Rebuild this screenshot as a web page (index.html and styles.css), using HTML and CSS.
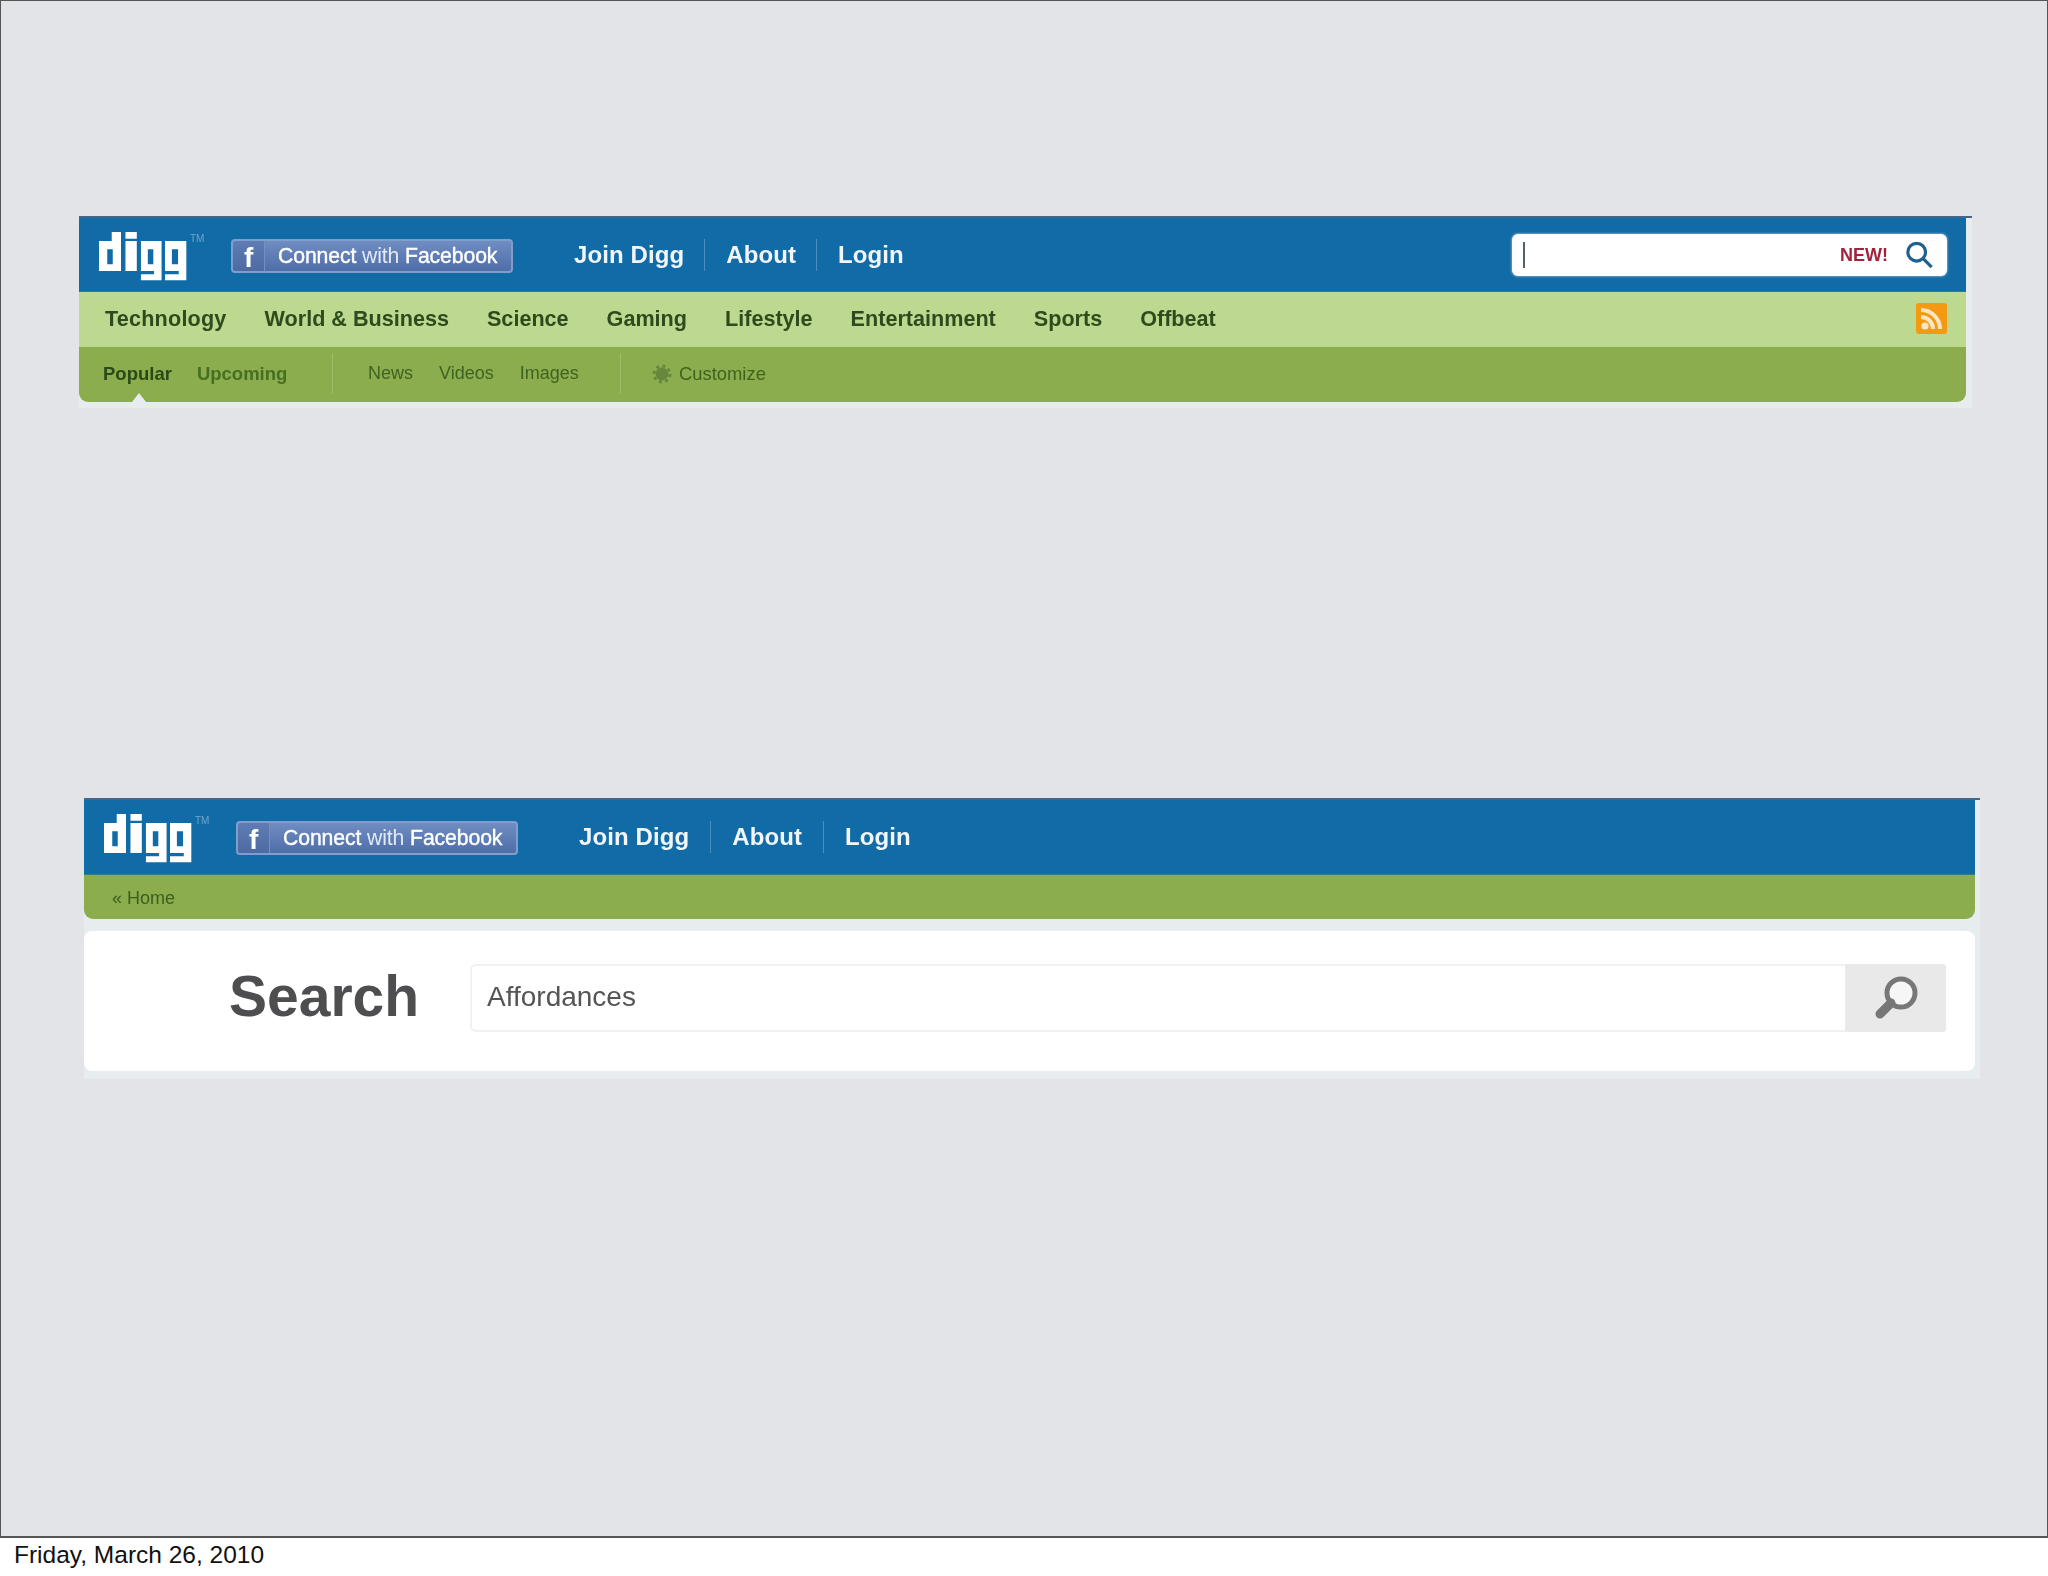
FILE: index.html
```html
<!DOCTYPE html>
<html lang="en">
<head>
<meta charset="utf-8">
<title>Digg navigation</title>
<link rel="stylesheet" href="styles.css">
</head>
<body>
<main class="slide">
  <section class="strip strip-one">
    <header class="bar-blue">
      <a class="logo" aria-label="digg">
        <svg class="logo-mark" viewBox="0 0 256 150" width="88" height="50" preserveAspectRatio="none"><path fill-rule="evenodd" d="M37 3H64V120H0V30H37ZM24 55V100H40V55ZM77 3H110V23H77ZM77 30H110V120H77ZM122 30H182V148H122V130H160V120H122ZM142 55V100H158V55ZM192 30H254V148H192V130H232V120H192ZM212 55V100H230V55Z"/></svg>
        <span class="tm">TM</span>
      </a>
      <a class="fb-button"><span class="fb-f">f</span><span class="fb-label"><b>Connect</b> with <b>Facebook</b></span></a>
      <nav class="main-links"><a>Join Digg</a><a>About</a><a>Login</a></nav>
      <div class="top-search">
        <span class="caret"></span>
        <span class="new">NEW!</span>
        <svg class="top-lens" viewBox="0 0 30 30" width="29" height="28"><circle cx="12" cy="12" r="9.5"/><path d="M19 19L28 28"/></svg>
      </div>
    </header>
    <nav class="bar-light">
      <a>Technology</a><a>World &amp; Business</a><a>Science</a><a>Gaming</a><a>Lifestyle</a><a>Entertainment</a><a>Sports</a><a>Offbeat</a>
      <svg class="rss" viewBox="0 0 31 31" width="31" height="31"><rect width="31" height="31" rx="3" fill="#f39a12"/><circle cx="9" cy="23" r="3.6" fill="#fbe6c4"/><path d="M5 14a12 12 0 0 1 12 12M5 7a19 19 0 0 1 19 19" fill="none" stroke="#fbe6c4" stroke-width="4"/></svg>
    </nav>
    <nav class="bar-dark">
      <div class="group group-first"><a class="active">Popular</a><a class="bold">Upcoming</a></div>
      <div class="group group-media"><a>News</a><a>Videos</a><a>Images</a></div>
      <div class="group group-custom">
        <svg class="gear" viewBox="0 0 20 20" width="20" height="20"><circle cx="10" cy="10" r="6.5" fill="#5f8038"/><circle cx="10" cy="10" r="8" fill="none" stroke="#5f8038" stroke-width="3" stroke-dasharray="3 3.3"/></svg>
        <a class="customize">Customize</a>
      </div>
      <span class="pointer"></span>
    </nav>
  </section>

  <section class="strip strip-two">
    <header class="bar-blue">
      <a class="logo" aria-label="digg">
        <svg class="logo-mark" viewBox="0 0 256 150" width="88" height="50" preserveAspectRatio="none"><path fill-rule="evenodd" d="M37 3H64V120H0V30H37ZM24 55V100H40V55ZM77 3H110V23H77ZM77 30H110V120H77ZM122 30H182V148H122V130H160V120H122ZM142 55V100H158V55ZM192 30H254V148H192V130H232V120H192ZM212 55V100H230V55Z"/></svg>
        <span class="tm">TM</span>
      </a>
      <a class="fb-button"><span class="fb-f">f</span><span class="fb-label"><b>Connect</b> with <b>Facebook</b></span></a>
      <nav class="main-links"><a>Join Digg</a><a>About</a><a>Login</a></nav>
    </header>
    <nav class="bar-home"><a>« Home</a></nav>
    <div class="search-panel">
      <h1 class="search-title">Search</h1>
      <div class="search-field">Affordances</div>
      <div class="search-button">
        <svg viewBox="0 0 44 44" width="44" height="44"><circle cx="27" cy="17" r="14" fill="#f6f6f6" stroke="#777" stroke-width="5"/><path d="M17 27L6 38" stroke="#777" stroke-width="9" stroke-linecap="round"/></svg>
      </div>
    </div>
  </section>
</main>
<footer class="date">Friday, March 26, 2010</footer>
</body>
</html>
```

FILE: styles.css
```css
* { box-sizing: border-box; }

html, body {
  margin: 0;
  height: 1576px;
  overflow: hidden;
  background: #fff;
  font-family: "Liberation Sans", Arial, sans-serif;
}

.slide {
  height: 1538px;
  padding-top: 215px;
  background: #e2e4e8;
  border: 1px solid #555;
  border-bottom-width: 2px;
}

.strip {
  display: flex;
  flex-direction: column;
  background: #e7ecef;
  border-top: 2px solid #44668a;
  filter: blur(0.7px);
}

.strip-one {
  width: 1893px;
  margin-left: 78px;
  padding: 0 6px 6px 0;
}

.strip-two {
  width: 1896px;
  margin: 390px 0 0 83px;
  padding: 0 5px 8px 0;
}

/* blue header */
.bar-blue {
  display: flex;
  align-items: center;
  height: 74px;
  background: #116ba6;
  border-bottom: 1px solid #2d7f8f;
  padding: 0 19px;
  flex: none;
}

.strip-two .bar-blue { height: 75px; }

.logo {
  display: flex;
  width: 133px;
  height: 50px;
  margin-top: 2px;
  fill: #fff;
  flex: none;
}

.logo-mark { flex: none; margin-left: 1px; }

.tm {
  font-size: 10px;
  line-height: 10px;
  margin: 3px 0 0 3px;
  color: #6fa5cb;
}

.fb-button {
  display: flex;
  align-items: center;
  width: 282px;
  height: 34px;
  margin-top: 2px;
  border: 2px solid #7f9ecb;
  border-radius: 4px;
  background: linear-gradient(#6f8dc1, #4f6ea9);
  color: #fff;
  flex: none;
}

.fb-f {
  width: 32px;
  height: 30px;
  padding-left: 11px;
  font: bold 28px/33px "Liberation Sans", sans-serif;
  background: linear-gradient(#5f7db4, #4d6aa3);
  border-right: 1px solid #7190c4;
  border-radius: 3px 0 0 3px;
}

.fb-label {
  margin-left: 13px;
  font-size: 21.2px;
  letter-spacing: -0.1px;
  white-space: nowrap;
  color: #e2eaf5;
}

.fb-label b { font-weight: 400; color: #fff; -webkit-text-stroke: 0.4px #fff; }

.main-links {
  display: flex;
  margin-left: 40px;
  flex: none;
}

.main-links a {
  font-size: 24px;
  line-height: 32px;
  font-weight: bold;
  letter-spacing: 0.1px;
  color: #f2f6fa;
  padding: 0 21px 0 21px;
  border-left: 1px solid #4a8fbd;
}

.main-links a:first-child { border-left: 0; padding-left: 21px; }

.strip-one .main-links a { padding-right: 20px; }

/* top search */
.top-search {
  display: flex;
  align-items: center;
  width: 435px;
  height: 42px;
  margin-left: auto;
  padding: 0 13px 0 11px;
  background: #fff;
  border-radius: 6px;
  box-shadow: 0 0 2px 1px #6d9cc2;
  flex: none;
}

.caret {
  width: 2px;
  height: 26px;
  background: #53616d;
}

.new {
  margin-left: auto;
  padding-top: 2px;
  font-size: 18px;
  font-weight: bold;
  color: #a3233b;
}

.top-lens {
  margin-left: 17px;
  fill: none;
  stroke: #20608f;
  stroke-width: 3.4;
}

/* green rows */
.bar-light {
  display: flex;
  align-items: center;
  gap: 38px;
  height: 55px;
  padding: 0 19px 2px 26px;
  background: #bdd88f;
  flex: none;
}

.bar-light a {
  font-size: 21.6px;
  font-weight: bold;
  color: #2f4a1c;
  white-space: nowrap;
}

.bar-light a:first-child { letter-spacing: 0.2px; }

.rss { margin-left: auto; flex: none; }

.bar-dark {
  position: relative;
  display: flex;
  align-items: center;
  height: 55px;
  padding-bottom: 2px;
  background: #8cad4d;
  border-radius: 0 0 9px 9px;
  color: #3e6321;
  font-size: 18px;
  flex: none;
}

.group {
  display: flex;
  align-items: center;
  height: 40px;
  white-space: nowrap;
}

.group-first {
  width: 254px;
  padding-left: 24px;
  gap: 25px;
  font-size: 18.5px;
  border-right: 1px solid #a0bd68;
}

.group-media {
  width: 288px;
  padding-left: 35px;
  gap: 26px;
  border-right: 1px solid #a0bd68;
}

.group-custom {
  padding-left: 31px;
  gap: 7px;
}

.customize { font-size: 18.4px; }

.gear { opacity: 0.8; }

.active { font-weight: bold; color: #294a17; }
.bold { font-weight: bold; color: #456f22; }

.pointer {
  position: absolute;
  left: 53px;
  bottom: 0;
  border: 7px solid transparent;
  border-top: 0;
  border-bottom: 9px solid #e7ecef;
}

.bar-home {
  display: flex;
  align-items: center;
  height: 44px;
  padding: 3px 0 0 28px;
  background: #8cad4d;
  border-radius: 0 0 9px 9px;
  font-size: 18px;
  color: #3a5f1d;
  flex: none;
}

/* search panel */
.search-panel {
  display: flex;
  align-items: stretch;
  height: 140px;
  margin-top: 12px;
  padding: 33px 29px 39px 0;
  background: #fff;
  border-radius: 8px;
}

.search-title {
  width: 386px;
  margin: 0;
  padding-left: 145px;
  font-size: 57px;
  line-height: 64px;
  color: #4e4e50;
  flex: none;
}

.search-field {
  flex: 1;
  padding-left: 15px;
  font-size: 28px;
  line-height: 62px;
  color: #555;
  border: 2px solid #eff1f2;
  border-right: 0;
  border-radius: 6px 0 0 6px;
}

.search-button {
  display: flex;
  align-items: center;
  justify-content: center;
  width: 101px;
  background: #e9e9e9;
  border-radius: 0 3px 3px 0;
  flex: none;
}

.date {
  padding: 1px 0 0 14px;
  font-size: 24.5px;
  line-height: 32px;
  color: #111;
}
```
